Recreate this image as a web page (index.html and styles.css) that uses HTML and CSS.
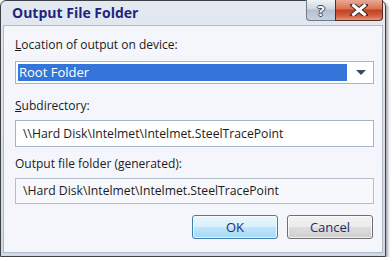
FILE: index.html
```html
<!DOCTYPE html>
<html lang="en">

<head>
    <meta charset="UTF-8">
    <title>Output File Folder</title>
    <link rel="stylesheet" href="styles.css">
</head>

<body>
    <div class="window">
        <div class="titlebar">
            <div class="title">Output File Folder</div>
            <div class="caption-btns">
                <div class="btn-help">?</div>
                <div class="btn-close">
                    <svg width="18" height="12" viewBox="0 0 18 12">
                        <path d="M3 1 L15 11 M15 1 L3 11" stroke="#3a2a28" stroke-width="5" stroke-linecap="square" fill="none"/>
                        <path d="M3.5 1.5 L14.5 10.5 M14.5 1.5 L3.5 10.5" stroke="#fff" stroke-width="3" stroke-linecap="square" fill="none"/>
                    </svg>
                </div>
            </div>
        </div>
        <div class="content">
            <div class="label first"><u>L</u>ocation of output on device:</div>
            <div class="select">
                <div class="select-value">Root Folder</div>
                <div class="select-arrow"></div>
            </div>
            <div class="label"><u>S</u>ubdirectory:</div>
            <div class="field">\\Hard Disk\Intelmet\Intelmet.SteelTracePoint</div>
            <div class="label tight">Output file folder (generated):</div>
            <div class="field readonly">\Hard Disk\Intelmet\Intelmet.SteelTracePoint</div>
            <div class="buttons">
                <div class="button default">OK</div>
                <div class="button">Cancel</div>
            </div>
        </div>
    </div>
</body>

</html>
```

FILE: styles.css
```css
* {
    padding: 0;
    margin: 0;
    box-sizing: border-box;
}

body {
    background: #fff;
    font-family: "Open Sans", "Noto Sans", sans-serif;
    font-size: 12px;
    color: #1b1b1b;
}

.window {
    width: 386px;
    height: 257px;
    border: 1px solid #3d4249;
    border-radius: 6px 6px 0 0;
    background: linear-gradient(#e4e9f0, #cfd8e4);
    padding: 0 2px 3px 2px;
    box-shadow: 2px 2px 3px rgba(0, 0, 0, 0.35);
    display: flex;
    flex-direction: column;
}

.titlebar {
    height: 24px;
    display: flex;
    justify-content: space-between;
    align-items: flex-start;
}

.title {
    padding: 2px 0 0 9px;
    font-size: 14px;
    font-weight: bold;
    color: #1c2580;
    line-height: 20px;
}

.caption-btns {
    display: flex;
    margin-top: -1px;
}

.btn-help,
.btn-close {
    height: 21px;
    border: 1px solid #6f7a88;
    border-top: none;
    display: flex;
    align-items: center;
    justify-content: center;
}

.btn-help {
    width: 29px;
    border-radius: 0 0 0 4px;
    border-right: none;
    background: linear-gradient(#eef2f6, #cdd6e1 45%, #b4c0cf 50%, #c6d2df);
    font-weight: bold;
    font-size: 15px;
    color: #fff;
    text-shadow: -1px 0 #3b4350, 1px 0 #3b4350, 0 -1px #3b4350, 0 1px #3b4350;
}

.btn-close {
    width: 48px;
    border-radius: 0 0 4px 0;
    border-color: #5a2a22;
    background: linear-gradient(#e9a995, #d9714f 45%, #c4401f 50%, #d2603f 80%, #e0957a);
}

.content {
    flex: 1;
    background: #f4f6fb;
    border: 1px solid #b0b9c6;
    padding: 11px 8px 0 11px;
}

.label {
    line-height: 16px;
    margin-top: 14px;
    margin-bottom: 6px;
}

.label.first {
    margin-top: 0;
    margin-bottom: 8px;
}

.label.tight {
    margin-top: 9px;
}

.select {
    height: 23px;
    border: 1px solid #a4b3c8;
    background: #fff;
    padding: 2px;
    display: flex;
    align-items: center;
}

.select-value {
    width: 329px;
    height: 17px;
    background: #3375d8;
    color: #fff;
    font-size: 13px;
    line-height: 17px;
    padding-left: 1px;
}

.select-arrow {
    margin-left: 9px;
    width: 0;
    height: 0;
    border-left: 5px solid transparent;
    border-right: 5px solid transparent;
    border-top: 5px solid #3d4a66;
}

.field {
    height: 27px;
    border: 1px solid #a4b3c8;
    background: #fff;
    padding-left: 7px;
    line-height: 25px;
    font-size: 12.2px;
    white-space: nowrap;
}

.field.readonly {
    height: 26px;
    line-height: 24px;
    background: #f7f8fb;
    border-color: #b5bfcc;
}

.buttons {
    display: flex;
    justify-content: flex-end;
    gap: 9px;
    margin-top: 11px;
    padding-right: 1px;
}

.button {
    width: 86px;
    height: 24px;
    border: 1px solid #707070;
    border-radius: 3px;
    background: linear-gradient(#f3f3f3, #ebebeb 48%, #dddddd 52%, #cfcfcf);
    box-shadow: inset 0 0 0 1px rgba(255, 255, 255, 0.7);
    text-align: center;
    line-height: 22px;
    color: #1d2a70;
    font-size: 13px;
}

.button.default {
    border-color: #3c7fb1;
    background: linear-gradient(#eaf6fd, #d9f0fc 48%, #bee6fd 52%, #a7d9f5);
}
```
